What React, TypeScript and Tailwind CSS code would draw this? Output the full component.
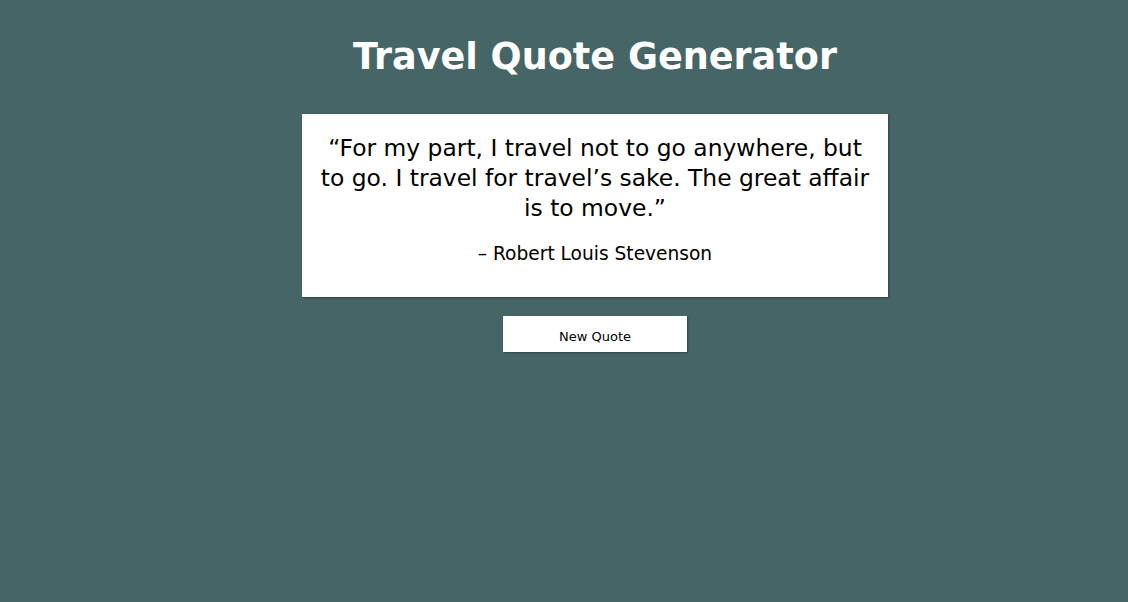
export default function App() {
  return (
    <div
      className="min-h-screen bg-[#466566] pl-[62px] pt-[34px]"
      style={{ fontFamily: "Verdana, 'DejaVu Sans', sans-serif" }}
    >
      <div className="flex flex-col items-center">
        <h1 className="text-[36.6px] font-bold leading-[46px] text-white">
          Travel Quote Generator
        </h1>
        <div className="mt-[34px] w-[586px] h-[183px] bg-white px-4 pt-[19px] text-center text-black shadow-[1px_1px_2px_rgba(0,0,0,0.35)]">
          <p className="text-[23.4px] leading-[30px]">
            “For my part, I travel not to go anywhere, but to go. I travel for
            travel’s sake. The great affair is to move.”
          </p>
          <p className="mt-[19px] text-[18.6px] leading-[24px]">
            – Robert Louis Stevenson
          </p>
        </div>
        <button className="mt-[19px] w-[184px] h-[36px] bg-white pt-[5px] text-[13px] text-black shadow-[1px_1px_2px_rgba(0,0,0,0.35)]">
          New Quote
        </button>
      </div>
    </div>
  );
}
